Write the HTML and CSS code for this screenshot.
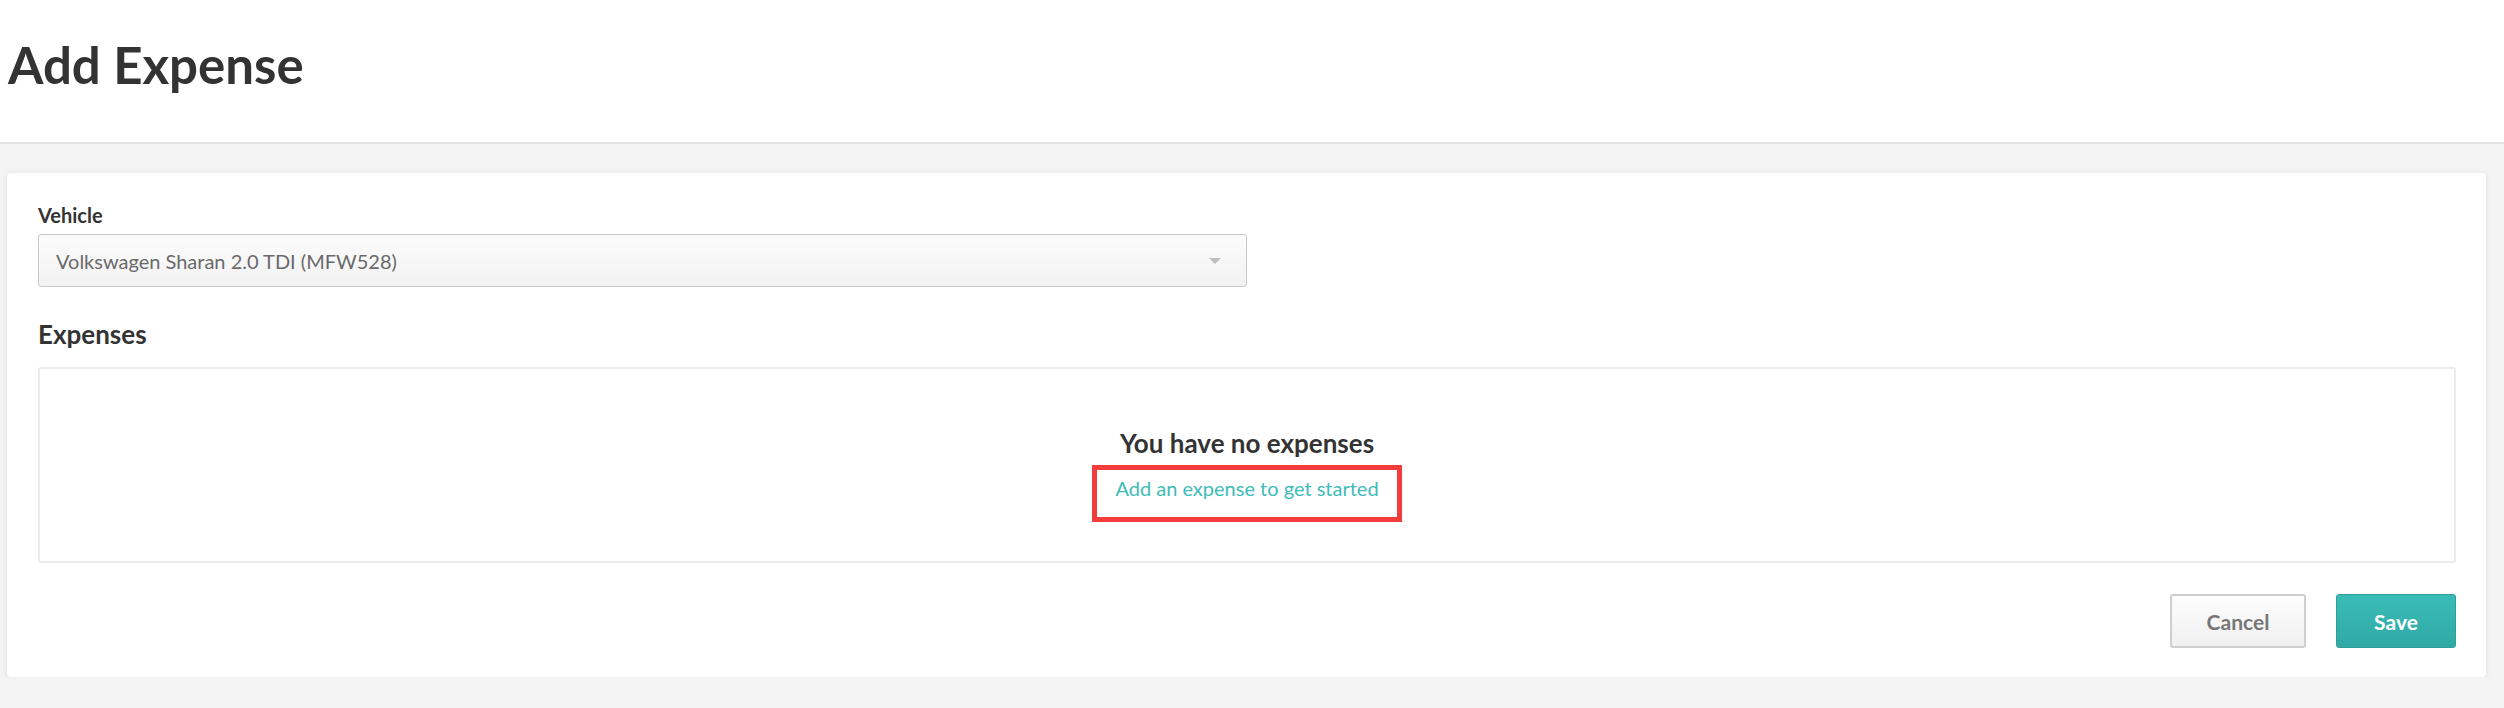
FILE: index.html
```html
<!DOCTYPE html>
<html lang="en">
<head>
    <meta charset="UTF-8">
    <meta name="viewport" content="width=device-width, initial-scale=1.0">
    <title>Add Expense</title>
    <link rel="stylesheet" href="styles.css">
</head>
<body>
    <div class="page-header">
        <h1 class="page-title">Add Expense</h1>
    </div>
    <div class="content">
        <div class="card">
            <label class="field-label">Vehicle</label>
            <div class="select">
                <span class="select-value">Volkswagen Sharan 2.0 TDI (MFW528)</span>
                <span class="select-arrow"></span>
            </div>

            <h2 class="section-title">Expenses</h2>
            <div class="empty-box">
                <div class="empty-title">You have no expenses</div>
                <div class="highlight-box">
                    <a class="empty-link" href="#">Add an expense to get started</a>
                </div>
            </div>

            <div class="actions">
                <button class="btn btn-cancel">Cancel</button>
                <button class="btn btn-save">Save</button>
            </div>
        </div>
    </div>
</body>
</html>
```

FILE: styles.css
```css
html, body {
    margin: 0;
    background-color: #f3f3f3;
    font-family: Lato, "Open Sans", sans-serif;
    color: #333;
}
.page-header {
    background-color: white;
    height: 108px;
    border-bottom: 2px solid #e2e2e2;
    padding: 34px 0 0 8px;
}
.page-title {
    margin: 0;
    font-size: 51px;
    line-height: 62px;
    font-weight: 700;
    color: #333;
}
.content {
    padding: 29px 18px 0 7px;
}
.card {
    background-color: white;
    border-radius: 4px;
    box-shadow: 0 1px 5px rgba(0, 0, 0, 0.09);
    padding: 30px 30px 29px 31px;
}
.field-label {
    display: block;
    font-size: 20px;
    line-height: 24px;
    font-weight: 700;
    color: #333;
}
.select {
    margin-top: 7px;
    width: 1209px;
    height: 53px;
    box-sizing: border-box;
    border: 1px solid #c9c9c9;
    border-radius: 3px;
    background: linear-gradient(#fcfcfc, #f2f2f2);
    display: flex;
    align-items: center;
    justify-content: space-between;
    padding: 0 25px 0 17px;
}
.select-value {
    font-size: 20px;
    color: #6a6a6a;
}
.select-arrow {
    width: 0;
    height: 0;
    border-left: 6px solid transparent;
    border-right: 6px solid transparent;
    border-top: 6px solid #bdbdbd;
}
.section-title {
    margin: 31px 0 0;
    font-size: 26px;
    line-height: 32px;
    font-weight: 700;
    color: #333;
}
.empty-box {
    margin-top: 17px;
    height: 196px;
    box-sizing: border-box;
    border: 2px solid #ececec;
    border-radius: 3px;
    padding-top: 59px;
    display: flex;
    flex-direction: column;
    align-items: center;
}
.empty-title {
    font-size: 26px;
    line-height: 30px;
    font-weight: 700;
    color: #333;
}
.highlight-box {
    margin-top: 7px;
    border: 5px solid #f33c3c;
    padding: 5px 18px 16px;
}
.empty-link {
    display: block;
    font-size: 20px;
    line-height: 26px;
    color: #3ebcb7;
    text-decoration: none;
}
.actions {
    margin-top: 31px;
    display: flex;
    justify-content: flex-end;
    gap: 30px;
}
.btn {
    height: 54px;
    border-radius: 3px;
    font-family: Lato, "Open Sans", sans-serif;
    font-size: 21px;
    font-weight: 700;
    cursor: pointer;
}
.btn-cancel {
    width: 136px;
    border: 2px solid #cfcfcf;
    background: linear-gradient(#fdfdfd, #f0f0f0);
    color: #777;
}
.btn-save {
    width: 120px;
    border: 1px solid #2d9f9b;
    background: linear-gradient(#39bcb7, #31a9a5);
    color: white;
}
```
